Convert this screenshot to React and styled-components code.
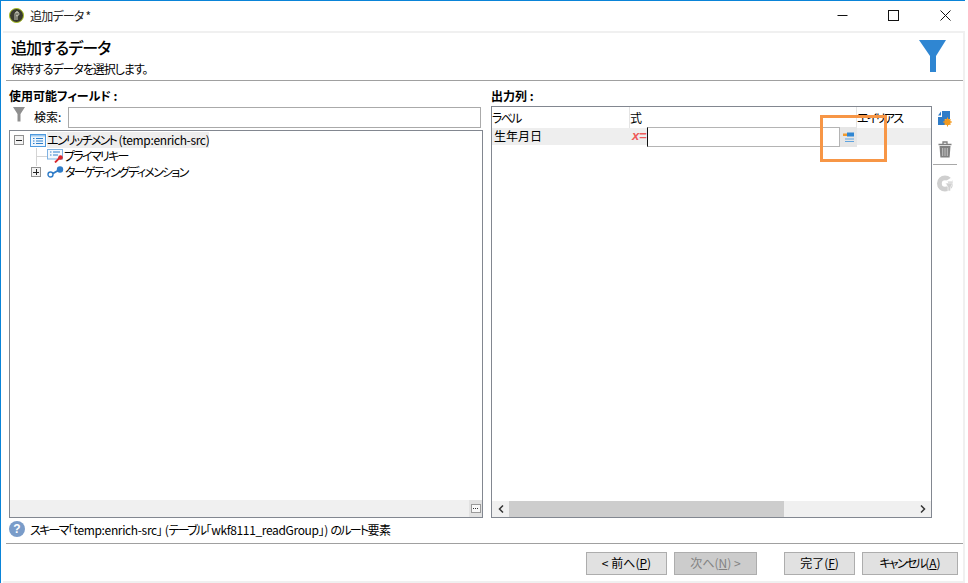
import React from "react";
import styled, { createGlobalStyle } from "styled-components";

const GlobalStyle = createGlobalStyle`
  html, body {
    margin: 0;
    padding: 0;
    background: #ffffff;
  }
  * {
    box-sizing: border-box;
  }
`;

const FONT = `"Noto Sans CJK JP", "Open Sans", "Liberation Sans", sans-serif`;

const Page = styled.div`
  position: relative;
  width: 968px;
  height: 583px;
  overflow: hidden;
  background: #ffffff;
  font-family: ${FONT};
  font-feature-settings: "palt";
  font-size: 12px;
  color: #000000;
`;

const TopEdge = styled.div`
  width: 965px;
  height: 1px;
  flex: none;
  background: #0a84d8;
`;

const Frame = styled.div`
  width: 968px;
  height: 583px;
  display: flex;
  flex-direction: column;
`;

const Window = styled.div`
  flex: 1;
  min-height: 0;
  border-left: 1px solid #0a84d8;
  display: flex;
  flex-direction: column;
`;

const TitleBar = styled.div`
  height: 30px;
  flex: none;
  display: flex;
  align-items: center;
  padding: 0 0 2px 8px;
  gap: 6px;
`;

const TitleText = styled.span`
  flex: 1;
  color: #222222;
  letter-spacing: -0.8px;
`;

const WinButton = styled.div`
  width: 45.5px;
  height: 28px;
  display: flex;
  align-items: center;
  justify-content: center;
`;

const Body = styled.div`
  flex: 1;
  margin: 0 3px 0 2px;
  border-top: 2px solid #f0f0f0;
  border-right: 2px solid #f0f0f0;
  border-bottom: 2px solid #f0f0f0;
  display: flex;
  flex-direction: column;
  min-height: 0;
`;

const Header = styled.div`
  height: 48px;
  flex: none;
  margin-left: 3px;
  padding: 2px 16px 0 5px;
  border-bottom: 1px solid #a0a0a0;
  display: flex;
  justify-content: space-between;
`;

const HeaderTitle = styled.div`
  font-size: 16px;
  line-height: 24px;
  font-weight: 500;
  letter-spacing: -0.9px;
`;

const HeaderSub = styled.div`
  font-size: 12px;
  line-height: 20px;
  letter-spacing: -1.05px;
`;

const FunnelWrap = styled.div`
  margin-top: 5px;
`;

const Columns = styled.div`
  flex: 1;
  min-height: 0;
  display: flex;
  padding: 6px 0 0 6px;
`;

const LeftPane = styled.div`
  width: 474px;
  flex: none;
  display: flex;
  flex-direction: column;
`;

const RightPane = styled.div`
  width: 467px;
  flex: none;
  margin-left: 8px;
  display: flex;
  flex-direction: column;
`;

const PaneLabel = styled.div`
  font-size: 12px;
  line-height: 17px;
  height: 18px;
  font-weight: 700;
`;

const SearchRow = styled.div`
  height: 25px;
  flex: none;
  display: flex;
  align-items: flex-start;
  padding: 2px 2px 0 4px;
`;

const SearchLabel = styled.span`
  width: 34px;
  margin-left: 9px;
  font-size: 12px;
  line-height: 20px;
`;

const SearchInput = styled.div`
  flex: 1;
  height: 21px;
  border: 1px solid #aaaaaa;
  background: #ffffff;
`;

const TreeBox = styled.div`
  flex: 1;
  border: 1px solid #828790;
  display: flex;
  flex-direction: column;
  min-height: 0;
`;

const TreeBody = styled.div`
  flex: 1;
  padding: 1px 0 0 4px;
`;

const TreeRow = styled.div`
  height: 16px;
  display: flex;
  align-items: center;
  padding-left: ${({ $indent }) => $indent || 0}px;
  white-space: nowrap;
`;

const TreeIcon = styled.span`
  display: flex;
  flex: none;
  margin: 0 1px 0 ${({ $left }) => $left || 0}px;
`;

const TreeLabel = styled.span`
  background: ${({ $selected }) => ($selected ? "#eeeeee" : "transparent")};
  line-height: 16px;
  letter-spacing: -0.35px;
`;

const Kana = styled.span`
  letter-spacing: -1.7px;
`;

const Expander = styled.span`
  width: 10px;
  height: 10px;
  border: 1px solid #919191;
  background: #f3f3f3;
  flex: none;
  display: flex;
  align-items: center;
  justify-content: center;
  position: relative;
  &::before {
    content: "";
    width: 6px;
    height: 1px;
    background: #222222;
  }
  &::after {
    content: "";
    display: ${({ $open }) => ($open ? "none" : "block")};
    position: absolute;
    width: 1px;
    height: 6px;
    left: 3.5px;
    top: 1px;
    background: #222222;
  }
`;

const Connector = styled.span`
  width: 11px;
  height: 1px;
  flex: none;
  background: #d4d4d4;
  position: relative;
  &::before {
    content: "";
    position: absolute;
    left: 0;
    top: -8px;
    width: 1px;
    height: 18px;
    background: #d4d4d4;
  }
`;

const TreeFooter = styled.div`
  height: 17px;
  flex: none;
  background: #f0f0f0;
  display: flex;
  justify-content: flex-end;
`;

const MoreButton = styled.div`
  width: 13px;
  background: #e2e2e2;
  display: flex;
  align-items: center;
  justify-content: center;
`;

const MoreBox = styled.div`
  width: 10px;
  height: 9px;
  border: 1px solid #9a9a9a;
  background: #f8f8f8;
  display: flex;
  align-items: center;
  justify-content: space-evenly;
  padding: 0 1px;
`;

const MoreDot = styled.span`
  width: 1px;
  height: 1px;
  background: #333333;
`;

const GridArea = styled.div`
  flex: 1;
  display: flex;
  min-height: 0;
  margin-top: 1px;
`;

const GridBox = styled.div`
  width: 441px;
  flex: none;
  border: 1px solid #828790;
  display: flex;
  flex-direction: column;
`;

const GridHead = styled.div`
  height: 21px;
  flex: none;
  display: grid;
  grid-template-columns: 138px 227px 1fr;
  line-height: 21px;
`;

const GridHeadCell = styled.div`
  border-right: ${({ $last }) => ($last ? "none" : "1px solid #e4e4e4")};
  white-space: nowrap;
  overflow: hidden;
`;

const GridRow = styled.div`
  height: 17px;
  flex: none;
  display: grid;
  grid-template-columns: 138px 227px 1fr;
  background: #eeeeee;
`;

const RowLabel = styled.div`
  padding-left: 2px;
  line-height: 15px;
`;

const XMark = styled.span`
  width: 17px;
  flex: none;
  padding-left: 2px;
  color: #ee5a5a;
  font-family: "Liberation Sans", sans-serif;
  font-style: italic;
  font-weight: 700;
  font-size: 13px;
  line-height: 18px;
  letter-spacing: -0.3px;
`;

const ExprCell = styled.div`
  display: flex;
  height: 20px;
  margin-top: -1px;
`;

const ExprInput = styled.div`
  flex: 1;
  border: 1px solid #b4b4b4;
  border-left: 1px solid #111111;
  background: #ffffff;
`;

const ExprButton = styled.div`
  width: 17px;
  background: #e6e6e6;
  display: flex;
  align-items: center;
  justify-content: center;
`;

const GridSpace = styled.div`
  flex: 1;
`;

const ScrollBar = styled.div`
  height: 16px;
  flex: none;
  background: #f0f0f0;
  display: flex;
  align-items: center;
`;

const ScrollArrow = styled.div`
  width: 17px;
  flex: none;
  display: flex;
  align-items: center;
  justify-content: center;
`;

const ScrollTrack = styled.div`
  flex: 1;
  height: 100%;
`;

const ScrollThumb = styled.div`
  height: 100%;
  background: #cdcdcd;
`;

const SideTools = styled.div`
  width: 26px;
  flex: none;
  padding-top: 2px;
  display: flex;
  flex-direction: column;
  align-items: center;
`;

const SideIcon = styled.div`
  width: 24px;
  height: 22px;
  margin-bottom: ${({ $after }) => $after || 0}px;
  display: flex;
  align-items: center;
  justify-content: center;
`;

const SideRule = styled.div`
  width: 24px;
  height: 1px;
  margin-bottom: 7px;
  background: #a8a8a8;
`;

const StatusRow = styled.div`
  height: 25px;
  flex: none;
  margin-left: 6px;
  padding-bottom: 3px;
  display: flex;
  align-items: center;
  gap: 5px;
  letter-spacing: -0.35px;
`;

const HelpBadge = styled.span`
  width: 16px;
  height: 16px;
  flex: none;
  border-radius: 50%;
  background: #7a9cc9;
  color: #ffffff;
  font-family: "Liberation Sans", sans-serif;
  font-weight: 700;
  font-size: 12px;
  line-height: 16px;
  text-align: center;
  letter-spacing: 0;
`;

const Footer = styled.div`
  height: 38px;
  flex: none;
  margin-left: 3px;
  border-top: 1px solid #a0a0a0;
  display: flex;
  align-items: flex-start;
  padding: 8px 0 0 580px;
`;

const WizardButton = styled.div`
  width: ${({ $width }) => $width}px;
  height: 23px;
  margin-left: ${({ $gap }) => $gap || 0}px;
  background: ${({ disabled }) => (disabled ? "#cccccc" : "#e1e1e1")};
  border: 1px solid #adadad;
  color: ${({ disabled }) => (disabled ? "#838383" : "#000000")};
  line-height: 19px;
  text-align: center;
  white-space: nowrap;
`;

const Key = styled.span`
  text-decoration: underline;
`;

const Highlight = styled.div`
  position: absolute;
  left: 820px;
  top: 115px;
  width: 67px;
  height: 47px;
  border: 3px solid #f79646;
  pointer-events: none;
`;

const AppIcon = () => (
  <svg width="15" height="15" viewBox="0 0 15 15">
    <circle cx="7.5" cy="7.5" r="7" fill="#3a3a30" stroke="#a8c020" strokeWidth="1" />
    <path d="M6 12V6a2 2 0 0 1 4 0a2 2 0 0 1-3 1.6M8 3v9" fill="none" stroke="#d8d8c8" strokeWidth="0.9" />
  </svg>
);

const MinimizeIcon = () => (
  <svg width="11" height="11" viewBox="0 0 11 11">
    <path d="M0.5 5.5H10.5" stroke="#111" strokeWidth="1" />
  </svg>
);

const MaximizeIcon = () => (
  <svg width="11" height="11" viewBox="0 0 11 11">
    <rect x="0.5" y="0.5" width="10" height="10" fill="none" stroke="#111" />
  </svg>
);

const CloseIcon = () => (
  <svg width="11" height="11" viewBox="0 0 11 11">
    <path d="M0.5 0.5L10.5 10.5M10.5 0.5L0.5 10.5" stroke="#111" strokeWidth="1" />
  </svg>
);

const FunnelIcon = () => (
  <svg width="28" height="33" viewBox="0 0 28 33">
    <path d="M0 0H27L17 16V32H11V16Z" fill="#2f86d2" />
  </svg>
);

const SmallFunnelIcon = () => (
  <svg width="12" height="15" viewBox="0 0 12 15">
    <path d="M0 0H12L7.5 7V14.5H4.5V7Z" fill="#8f8f8f" />
  </svg>
);

const ListIcon = () => (
  <svg width="16" height="13" viewBox="0 0 16 13">
    <rect x="0.5" y="0.5" width="15" height="12" fill="#eef6fd" stroke="#4f9ade" />
    <rect x="1" y="1" width="14" height="1.5" fill="#9fcaf0" />
    <path d="M3 4.5H4.5M6 4.5H13M3 7H4.5M6 7H13M3 9.5H4.5M6 9.5H13" stroke="#2f80cc" strokeWidth="1" />
  </svg>
);

const KeyListIcon = () => (
  <svg width="16" height="14" viewBox="0 0 16 14">
    <rect x="0.5" y="0.5" width="15" height="9.5" fill="#f4f9fe" stroke="#7fb2e2" />
    <path d="M3 3H4.5M6 3H13M3 6H4.5M6 6H11" stroke="#2f80cc" strokeWidth="1" />
    <path d="M8 13.5L13 8.5" stroke="#d8262c" strokeWidth="1.8" />
    <circle cx="13.5" cy="8.5" r="2.3" fill="#d8262c" />
  </svg>
);

const LinkIcon = () => (
  <svg width="17" height="12" viewBox="0 0 17 12">
    <path d="M5 8L12 4" stroke="#2f7cc8" strokeWidth="2" />
    <circle cx="3.5" cy="8.5" r="2.5" fill="#ffffff" stroke="#2f7cc8" strokeWidth="1.4" />
    <circle cx="13" cy="3.5" r="3.2" fill="#2f7cc8" />
  </svg>
);

const ExprIcon = () => (
  <svg width="12" height="11" viewBox="0 0 12 11">
    <rect x="0" y="1.5" width="4" height="2.5" fill="#f09a30" />
    <rect x="4" y="0.5" width="7" height="4" fill="#2f86d2" />
    <path d="M2 7H11M2 9.5H11" stroke="#5fa4e0" strokeWidth="1.2" />
  </svg>
);

const AddColumnIcon = () => (
  <svg width="14" height="16" viewBox="0 0 14 16">
    <path d="M4 0H12V8H7V14H0V6H4Z" fill="#2f7cc8" />
    <path d="M0 4.5L3 0.5V4.5Z" fill="#2f7cc8" />
    <path d="M9.5 6.5V15.5M5 11H14M6.5 8L12.5 14M12.5 8L6.5 14" stroke="#f39a1e" strokeWidth="1" />
    <circle cx="9.5" cy="11" r="3.2" fill="#f39a1e" />
  </svg>
);

const TrashIcon = () => (
  <svg width="14" height="17" viewBox="0 0 14 17">
    <path d="M0.5 3.5H13.5M5 3V1H9V3" fill="none" stroke="#7f7f7f" strokeWidth="1.3" />
    <path d="M1.5 5H12.5L11.6 16.5H2.4Z" fill="#808080" />
    <path d="M4.7 7V15M7 7V15M9.3 7V15" stroke="#e0e0e0" strokeWidth="0.7" />
  </svg>
);

const DisabledRefreshIcon = () => (
  <svg width="16" height="17" viewBox="0 0 16 17">
    <circle cx="8" cy="8.5" r="5.6" fill="none" stroke="#cfcfcf" strokeWidth="4.8" />
    <path d="M8 6.5L14.5 2.5L15.5 6.5Z" fill="#ffffff" />
    <path d="M8.5 8H16L13.5 12.5V16H11V12.5Z" fill="#d0d0d0" stroke="#ffffff" strokeWidth="0.6" />
  </svg>
);

const ArrowLeft = () => (
  <svg width="6" height="8" viewBox="0 0 6 8">
    <path d="M5 0.5L1.5 4L5 7.5" fill="none" stroke="#333" strokeWidth="1.5" />
  </svg>
);

const ArrowRight = () => (
  <svg width="6" height="8" viewBox="0 0 6 8">
    <path d="M1 0.5L4.5 4L1 7.5" fill="none" stroke="#333" strokeWidth="1.5" />
  </svg>
);

export default function App() {
  return (
    <Page>
      <GlobalStyle />
      <Frame>
        <TopEdge />
        <Window>
          <TitleBar>
            <AppIcon />
            <TitleText>追加データ *</TitleText>
            <WinButton><MinimizeIcon /></WinButton>
            <WinButton><MaximizeIcon /></WinButton>
            <WinButton><CloseIcon /></WinButton>
          </TitleBar>
          <Body>
            <Header>
              <div>
                <HeaderTitle>追加するデータ</HeaderTitle>
                <HeaderSub>保持するデータを選択します。</HeaderSub>
              </div>
              <FunnelWrap><FunnelIcon /></FunnelWrap>
            </Header>
            <Columns>
              <LeftPane>
                <PaneLabel>使用可能フィールド :</PaneLabel>
                <SearchRow>
                  <SmallFunnelIcon />
                  <SearchLabel>検索:</SearchLabel>
                  <SearchInput />
                </SearchRow>
                <TreeBox>
                  <TreeBody>
                    <TreeRow>
                      <Expander $open />
                      <TreeIcon $left={6}><ListIcon /></TreeIcon>
                      <TreeLabel $selected><Kana>エンリッチメント</Kana> (temp:enrich-src)</TreeLabel>
                    </TreeRow>
                    <TreeRow $indent={22}>
                      <Connector />
                      <TreeIcon><KeyListIcon /></TreeIcon>
                      <TreeLabel><Kana>プライマリキー</Kana></TreeLabel>
                    </TreeRow>
                    <TreeRow $indent={17}>
                      <Expander />
                      <TreeIcon $left={6}><LinkIcon /></TreeIcon>
                      <TreeLabel><Kana>ターゲティングディメンション</Kana></TreeLabel>
                    </TreeRow>
                  </TreeBody>
                  <TreeFooter>
                    <MoreButton>
                      <MoreBox>
                        <MoreDot />
                        <MoreDot />
                        <MoreDot />
                      </MoreBox>
                    </MoreButton>
                  </TreeFooter>
                </TreeBox>
              </LeftPane>
              <RightPane>
                <PaneLabel>出力列 :</PaneLabel>
                <GridArea>
                  <GridBox>
                    <GridHead>
                      <GridHeadCell><Kana>ラベル</Kana></GridHeadCell>
                      <GridHeadCell>式</GridHeadCell>
                      <GridHeadCell $last><Kana>エイリアス</Kana></GridHeadCell>
                    </GridHead>
                    <GridRow>
                      <RowLabel>生年月日</RowLabel>
                      <ExprCell>
                        <XMark>x=</XMark>
                        <ExprInput />
                        <ExprButton><ExprIcon /></ExprButton>
                      </ExprCell>
                    </GridRow>
                    <GridSpace />
                    <ScrollBar>
                      <ScrollArrow><ArrowLeft /></ScrollArrow>
                      <ScrollTrack>
                        <ScrollThumb style={{ width: "68%" }} />
                      </ScrollTrack>
                      <ScrollArrow><ArrowRight /></ScrollArrow>
                    </ScrollBar>
                  </GridBox>
                  <SideTools>
                    <SideIcon $after={8}><AddColumnIcon /></SideIcon>
                    <SideIcon $after={4}><TrashIcon /></SideIcon>
                    <SideRule />
                    <SideIcon><DisabledRefreshIcon /></SideIcon>
                  </SideTools>
                </GridArea>
              </RightPane>
            </Columns>
            <StatusRow>
              <HelpBadge>?</HelpBadge>
              <span><Kana>スキーマ</Kana>「temp:enrich-src」 (<Kana>テーブル</Kana>「wkf8111_readGroup」) <Kana>のルート</Kana>要素</span>
            </StatusRow>
            <Footer>
              <WizardButton $width={81}>&lt; 前へ(<Key>P</Key>)</WizardButton>
              <WizardButton $width={83} $gap={7} disabled>次へ(<Key>N</Key>) &gt;</WizardButton>
              <WizardButton $width={71} $gap={27}>完了(<Key>F</Key>)</WizardButton>
              <WizardButton $width={96} $gap={7}><Kana>キャンセル</Kana>(<Key>A</Key>)</WizardButton>
            </Footer>
          </Body>
        </Window>
      </Frame>
      <Highlight />
    </Page>
  );
}
